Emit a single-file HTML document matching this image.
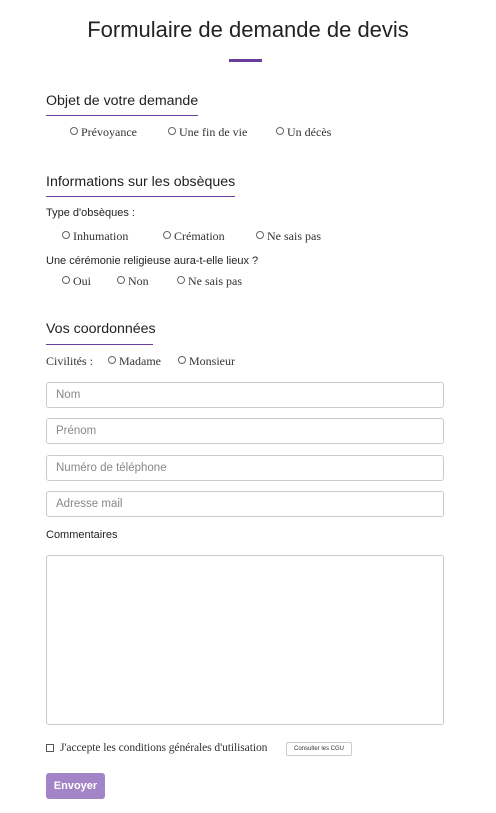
<!DOCTYPE html><html><head><meta charset="utf-8"><style>
body{margin:0;width:496px;height:813px;background:#fff;position:relative;font-family:"Liberation Sans",sans-serif;color:#222;overflow:hidden}
.a{position:absolute;white-space:nowrap}
.h{font-size:14.2px;color:#222}
.u{position:absolute;height:1px;background:#6a3d9a}
.s{font-family:"Liberation Serif",serif;font-size:12px;color:#333}
.r{display:inline-block;width:6px;height:6px;border:1px solid #666;border-radius:50%;margin-right:3px;vertical-align:1px}
.l{font-size:11px;color:#222}
.i{position:absolute;left:46px;width:396px;border:1px solid #c8ccd0;border-radius:3px;height:24px;font-size:11.5px;color:#888;box-sizing:content-box}
.i span{position:absolute;left:9px;top:6px}
</style></head><body>
<div class="a" style="left:0;width:496px;text-align:center;top:17px;font-size:22px;color:#222">Formulaire de demande de devis</div>
<div class="a" style="left:229px;top:59px;width:33px;height:3px;background:#6a3d9a"></div>

<div class="a h" style="left:46px;top:93px">Objet de votre demande</div>
<div class="u" style="left:46px;top:115px;width:152px"></div>
<div class="a s" style="left:70px;top:125px"><span class="r"></span>Prévoyance</div>
<div class="a s" style="left:168px;top:125px"><span class="r"></span>Une fin de vie</div>
<div class="a s" style="left:276px;top:125px"><span class="r"></span>Un décès</div>

<div class="a h" style="left:46px;top:174px">Informations sur les obsèques</div>
<div class="u" style="left:46px;top:196px;width:189px"></div>
<div class="a l" style="left:46px;top:207px">Type d'obsèques :</div>
<div class="a s" style="left:62px;top:229px"><span class="r"></span>Inhumation</div>
<div class="a s" style="left:163px;top:229px"><span class="r"></span>Crémation</div>
<div class="a s" style="left:256px;top:229px"><span class="r"></span>Ne sais pas</div>
<div class="a l" style="left:46px;top:255px">Une cérémonie religieuse aura-t-elle lieux ?</div>
<div class="a s" style="left:62px;top:274px"><span class="r"></span>Oui</div>
<div class="a s" style="left:117px;top:274px"><span class="r"></span>Non</div>
<div class="a s" style="left:177px;top:274px"><span class="r"></span>Ne sais pas</div>

<div class="a h" style="left:46px;top:321px">Vos coordonnées</div>
<div class="u" style="left:46px;top:344px;width:107px"></div>
<div class="a s" style="left:46px;top:354px">Civilités :</div>
<div class="a s" style="left:108px;top:354px"><span class="r"></span>Madame</div>
<div class="a s" style="left:178px;top:354px"><span class="r"></span>Monsieur</div>

<div class="i" style="top:382px"><span>Nom</span></div>
<div class="i" style="top:418px"><span>Prénom</span></div>
<div class="i" style="top:455px"><span>Numéro de téléphone</span></div>
<div class="i" style="top:491px"><span>Adresse mail</span></div>
<div class="a l" style="left:46px;top:529px">Commentaires</div>
<div class="i" style="top:555px;height:168px"></div>

<div class="a" style="left:46px;top:744px;width:6px;height:6px;border:1px solid #555"></div>
<div class="a s" style="left:60px;top:741px;font-size:11.6px;letter-spacing:-0.1px">J'accepte les conditions générales d'utilisation</div>
<div class="a" style="left:286px;top:742px;width:64px;height:12px;border:1px solid #ccc;border-radius:2px;font-size:6px;line-height:12px;text-align:center;color:#333">Consulter les CGU</div>
<div class="a" style="left:46px;top:773px;width:59px;height:26px;background:#a384c6;border-radius:3px;color:#fff;font-weight:bold;font-size:11px;line-height:26px;text-align:center">Envoyer</div>
</body></html>
